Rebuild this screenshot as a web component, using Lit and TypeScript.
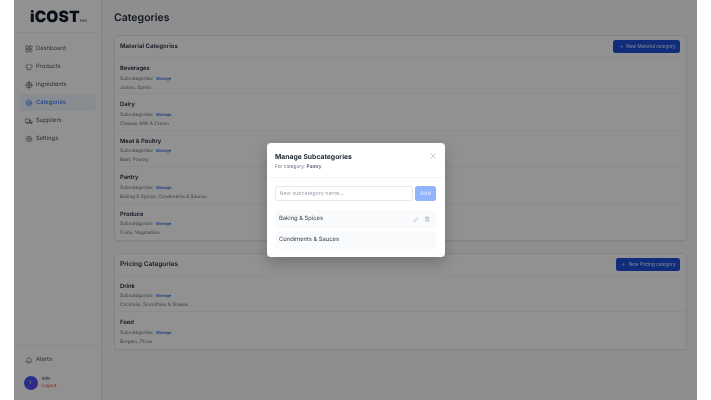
import { LitElement, html, css, svg } from 'lit';
import { customElement } from 'lit/decorators.js';

const icons: Record<string, unknown> = {
  dashboard: svg`<rect x="3" y="3" width="7.5" height="7.5" rx="1"/><rect x="13.5" y="3" width="7.5" height="7.5" rx="1"/><rect x="3" y="13.5" width="7.5" height="7.5" rx="1"/><rect x="13.5" y="13.5" width="7.5" height="7.5" rx="1"/>`,
  products: svg`<path d="M7 14.5a4.5 4.5 0 1 1 1.2-8.8 4.5 4.5 0 0 1 7.6 0A4.5 4.5 0 1 1 17 14.5V20H7z"/>`,
  ingredients: svg`<circle cx="12" cy="12" r="9"/><path d="M3 12h18M12 3c-3 5-3 13 0 18M12 3c3 5 3 13 0 18"/>`,
  categories: svg`<path d="M12 3l8 4.5v9L12 21l-8-4.5v-9z"/><circle cx="12" cy="12" r="4"/>`,
  suppliers: svg`<path d="M2 6h12v11H2zM14 10h4l4 4v3h-8z"/><circle cx="7" cy="18" r="2"/><circle cx="17.5" cy="18" r="2"/>`,
  settings: svg`<circle cx="12" cy="12" r="3"/><path d="M12 3l2 2.5 3.2-.4.8 3.1 3 1.3-1.5 2.5 1.5 2.5-3 1.3-.8 3.1-3.2-.4L12 21l-2-2.5-3.2.4-.8-3.1-3-1.3L4.5 12 3 9.5l3-1.3.8-3.1 3.2.4z"/>`,
  bell: svg`<path d="M6 16V11a6 6 0 0 1 12 0v5l2 2H4z"/><path d="M10 21h4"/>`,
  pencil: svg`<path d="M4 20l1-4L16 5l3 3L8 19z"/>`,
  trash: svg`<path d="M4 6h16M9 6V3h6v3M6 6l1 15h10l1-15M10 10v7M14 10v7"/>`,
  close: svg`<path d="M5 5l14 14M19 5L5 19"/>`,
  plus: svg`<path d="M12 5v14M5 12h14"/>`,
};

const icon = (name: string, cls = '') =>
  html`<svg class="icon ${cls}" viewBox="0 0 24 24">${icons[name]}</svg>`;

const nav = [
  ['dashboard', 'Dashboard'],
  ['products', 'Products'],
  ['ingredients', 'Ingredients'],
  ['categories', 'Categories'],
  ['suppliers', 'Suppliers'],
  ['settings', 'Settings'],
];

const material = [
  ['Beverages', 'Juices, Spirits'],
  ['Dairy', 'Cheese, Milk & Cream'],
  ['Meat & Poultry', 'Beef, Poultry'],
  ['Pantry', 'Baking & Spices, Condiments & Sauces'],
  ['Produce', 'Fruits, Vegetables'],
];

const pricing = [
  ['Drink', 'Cocktails, Smoothies & Shakes'],
  ['Food', 'Burgers, Pizza'],
];

@customElement('app-root')
export class AppRoot extends LitElement {
  static styles = css`
    :host {
      display: block;
      height: 400px;
      background: #fff;
      font-family: Inter, 'Liberation Sans', sans-serif;
      color: #111827;
      overflow: hidden;
      text-rendering: geometricPrecision;
      filter: blur(0.45px);
    }
    .shell {
      display: flex;
      height: 400px;
      margin: 0 14px;
      background: #f9fafb;
    }
    .icon {
      width: 8px;
      height: 8px;
      flex: none;
      fill: none;
      stroke: currentColor;
      stroke-width: 1.7;
      stroke-linecap: round;
      stroke-linejoin: round;
    }

    .sidebar {
      width: 88px;
      flex: none;
      display: flex;
      flex-direction: column;
      background: #fff;
      border-right: 1px solid #e5e7eb;
      box-sizing: border-box;
    }
    .logo {
      height: 33px;
      box-sizing: border-box;
      padding: 6px 0 0 16px;
      border-bottom: 1px solid #f3f4f6;
      font-size: 15.5px;
      line-height: 22px;
      font-weight: 900;
      color: #111827;
      letter-spacing: 0.1px;
      white-space: nowrap;
    }
    .logo small {
      font-size: 3.5px;
      font-weight: 700;
      color: #6b7280;
      letter-spacing: 0;
    }
    .nav {
      flex: 1;
      display: flex;
      flex-direction: column;
      gap: 1px;
      padding: 7px 5px 0 6px;
    }
    .nav-item {
      height: 17px;
      display: flex;
      align-items: center;
      gap: 3px;
      padding: 0 5px;
      border-radius: 3px;
      font-size: 5.8px;
      color: #4b5563;
    }
    .nav-item.active {
      background: #eff6ff;
      color: #2563eb;
    }
    .sidebar-foot {
      border-top: 1px solid #f3f4f6;
      height: 55px;
      box-sizing: border-box;
      padding: 7px 9.5px 0;
      display: flex;
      flex-direction: column;
      gap: 9px;
    }
    .alerts {
      display: flex;
      align-items: center;
      gap: 3px;
      height: 13px;
      padding-left: 1.5px;
      font-size: 5.8px;
      color: #4b5563;
    }
    .user {
      display: flex;
      align-items: center;
      gap: 4px;
    }
    .avatar {
      width: 14px;
      height: 14px;
      border-radius: 50%;
      background: linear-gradient(135deg, #2563eb, #7c3aed);
      color: #fff;
      font-size: 5px;
      display: flex;
      align-items: center;
      justify-content: center;
    }
    .user-name {
      font-size: 5px;
      color: #374151;
      line-height: 8px;
    }
    .logout {
      font-size: 4.5px;
      color: #ef4444;
      line-height: 7px;
    }

    .main {
      flex: 1;
      min-width: 0;
      padding: 10px 10px 0 12px;
    }
    h1 {
      margin: 0 0 10px;
      font-size: 10.5px;
      line-height: 15px;
      font-weight: 600;
      color: #1f2937;
    }
    .card {
      background: #fff;
      border: 1px solid #e5e7eb;
      border-radius: 4px;
      margin-bottom: 12px;
      box-shadow: 0 1px 1px rgba(0, 0, 0, 0.04);
    }
    .card-head {
      height: 22px;
      box-sizing: border-box;
      padding: 0 6px 0 5px;
      display: flex;
      align-items: center;
      justify-content: space-between;
      border-bottom: 1px solid #f3f4f6;
    }
    h2 {
      margin: 0;
      font-size: 6.5px;
      font-weight: 600;
      color: #1f2937;
    }
    h2.small {
      font-size: 6.1px;
    }
    .btn {
      height: 13px;
      display: flex;
      align-items: center;
      gap: 2.5px;
      padding: 0 4.5px 0 5.5px;
      background: #1d4ed8;
      color: #dbeafe;
      border: none;
      border-radius: 2.5px;
      font: 400 4.6px Inter, 'Liberation Sans', sans-serif;
    }
    .btn .icon {
      width: 5px;
      height: 5px;
    }
    .row {
      height: 36.4px;
      box-sizing: border-box;
      padding: 6px 5px 0;
      border-bottom: 1px solid #f3f4f6;
    }
    .row:last-child {
      border-bottom: none;
    }
    .row-title {
      font-size: 5.8px;
      line-height: 9.5px;
      font-weight: 600;
      color: #1f2937;
    }
    .row-sub {
      display: flex;
      align-items: baseline;
      gap: 2.5px;
      font-size: 4.7px;
      line-height: 9px;
      color: #6b7280;
    }
    .manage {
      font-size: 4px;
      font-weight: 500;
      color: #2563eb;
    }
    .row-list {
      font-size: 4.7px;
      line-height: 8px;
      color: #6b7280;
    }

    .overlay {
      position: fixed;
      inset: 0 14px;
      background: rgba(0, 0, 0, 0.43);
    }
    .modal {
      position: absolute;
      left: 253px;
      top: 143px;
      width: 178px;
      height: 114px;
      background: #fff;
      border-radius: 4px;
      box-shadow: 0 6px 14px rgba(0, 0, 0, 0.2);
    }
    .modal-head {
      height: 35px;
      box-sizing: border-box;
      padding: 8.5px 8px 0;
      display: flex;
      justify-content: space-between;
      border-bottom: 1px solid #f3f4f6;
    }
    .modal-title {
      font-size: 6.8px;
      line-height: 10px;
      font-weight: 700;
      color: #1f2937;
    }
    .modal-sub {
      font-size: 4.8px;
      line-height: 8px;
      margin-top: 1.5px;
      color: #6b7280;
    }
    .modal-sub b {
      font-weight: 500;
      color: #374151;
    }
    .modal-head .icon {
      color: #9ca3af;
      width: 8px;
      height: 8px;
      margin-top: 0.5px;
    }
    .modal-body {
      padding: 8px 9px 0 8px;
      display: flex;
      flex-direction: column;
      gap: 3.5px;
    }
    .add-row {
      display: flex;
      gap: 2.5px;
      margin-bottom: 5.5px;
    }
    .input {
      flex: 1;
      height: 15px;
      box-sizing: border-box;
      border: 1px solid #e5e7eb;
      border-radius: 2.5px;
      padding: 0 3.5px;
      display: flex;
      align-items: center;
      font-size: 5.3px;
      color: #9ca3af;
    }
    .add {
      width: 21px;
      height: 15px;
      border-radius: 2.5px;
      background: #93b4fd;
      color: #dbeafe;
      font-size: 5.5px;
      font-weight: 500;
      display: flex;
      align-items: center;
      justify-content: center;
    }
    .sub-item {
      height: 17.5px;
      display: flex;
      align-items: center;
      justify-content: space-between;
      padding: 0 6px 0 4px;
      border-radius: 2.5px;
      background: #f9fafb;
      font-size: 5.8px;
      color: #374151;
    }
    .sub-actions {
      display: flex;
      gap: 4.5px;
      color: #9ca3af;
    }
    .sub-actions .icon {
      width: 6.5px;
      height: 6.5px;
    }
  `;

  private renderCard(title: string, button: string, rows: string[][], small = false) {
    return html`
      <section class="card">
        <div class="card-head">
          <h2 class=${small ? 'small' : ''}>${title}</h2>
          <button class="btn">${icon('plus')} ${button}</button>
        </div>
        ${rows.map(
          ([name, list]) => html`
            <div class="row">
              <div class="row-title">${name}</div>
              <div class="row-sub">Subcategories: <span class="manage">Manage</span></div>
              <div class="row-list">${list}</div>
            </div>
          `,
        )}
      </section>
    `;
  }

  render() {
    return html`
      <div class="shell">
        <aside class="sidebar">
          <div class="logo">iCOST<small>PRO</small></div>
          <nav class="nav">
            ${nav.map(
              ([ic, label]) => html`
                <div class="nav-item ${label === 'Categories' ? 'active' : ''}">${icon(ic)} ${label}</div>
              `,
            )}
          </nav>
          <div class="sidebar-foot">
            <div class="alerts">${icon('bell')} Alerts</div>
            <div class="user">
              <div class="avatar">I</div>
              <div>
                <div class="user-name">info</div>
                <div class="logout">Logout</div>
              </div>
            </div>
          </div>
        </aside>
        <main class="main">
          <h1>Categories</h1>
          ${this.renderCard('Material Categories', 'New Material category', material, true)}
          ${this.renderCard('Pricing Categories', 'New Pricing category', pricing)}
        </main>
      </div>
      <div class="overlay">
        <div class="modal">
          <div class="modal-head">
            <div>
              <div class="modal-title">Manage Subcategories</div>
              <div class="modal-sub">For category: <b>Pantry</b></div>
            </div>
            ${icon('close')}
          </div>
          <div class="modal-body">
            <div class="add-row">
              <div class="input">New subcategory name...</div>
              <div class="add">Add</div>
            </div>
            <div class="sub-item">
              Baking & Spices
              <span class="sub-actions">${icon('pencil')}${icon('trash')}</span>
            </div>
            <div class="sub-item">Condiments & Sauces</div>
          </div>
        </div>
      </div>
    `;
  }
}
